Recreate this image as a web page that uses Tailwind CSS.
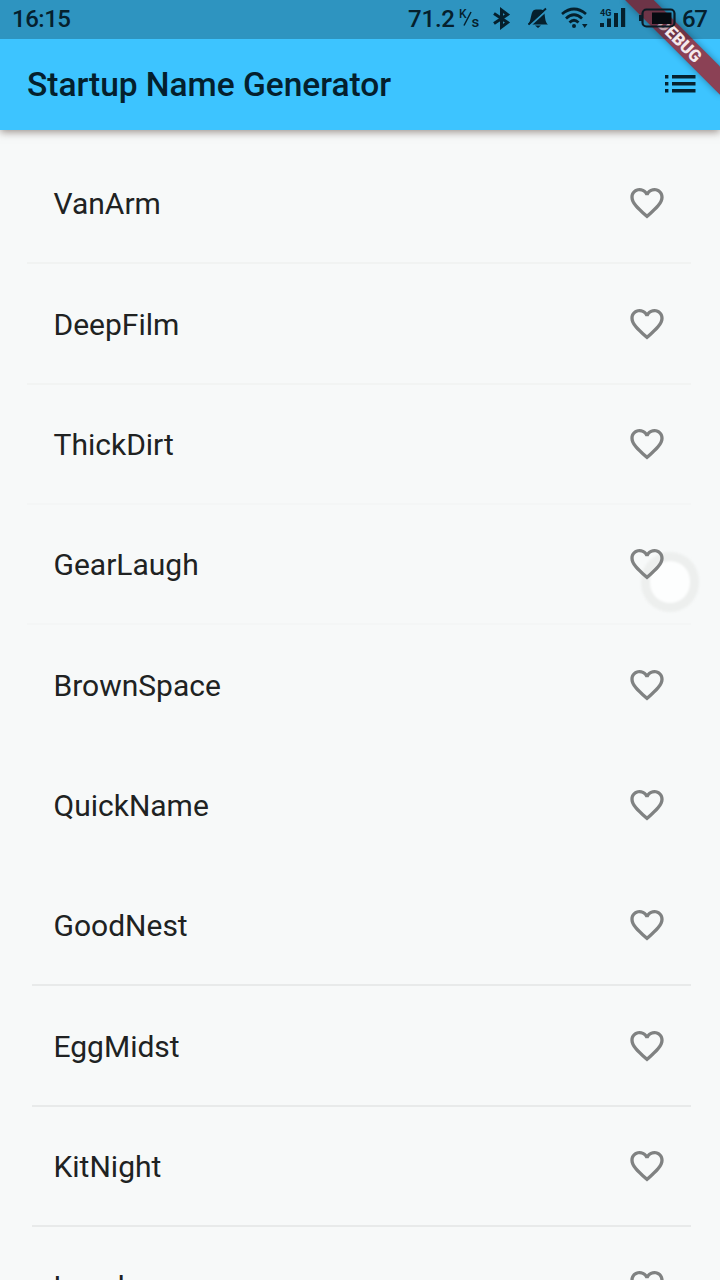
<!DOCTYPE html>
<html lang="en">
<head>
<meta charset="utf-8">
<title>Startup Name Generator</title>
<script src="https://cdn.jsdelivr.net/npm/@tailwindcss/browser@4"></script>
</head>
<body class="w-[720px] h-[1280px] overflow-hidden bg-[#f7f9f9] font-[Roboto,sans-serif]">
<div class="relative flex flex-col w-[720px] h-[1280px] overflow-hidden">
  <header class="relative z-10 shrink-0 h-[130px] bg-[#3dc4ff] text-[#04202d] shadow-[0_2px_8px_rgba(60,40,30,0.5)]">
    <div class="h-[39px] bg-[#2e94c0]"></div>
    <div class="flex items-center justify-between h-[91px] pl-[27px] pr-[24px]">
      <h1 class="text-[33.5px] leading-[40px] font-medium tracking-[-0.03px]">Startup Name Generator</h1>
      <svg class="w-[32px] h-[20px] mb-[2px]" viewBox="0 0 32 20" fill="#06222f"><path d="M1 1h3.400v3.400H1zM8 1h23.500v3.400H8zM1 8h3.400v3.400H1zM8 8h23.500v3.400H8zM1 15h3.400v3.400H1zM8 15h23.500v3.400H8z"/></svg>
    </div>
  </header>

  <main class="flex flex-col pt-[14px]" id="list"></main>

  <!-- touch indicator -->
  <div class="absolute left-[641px] top-[552px] w-[58px] h-[60px] rounded-full border-[9px] border-[#e9ebea]/80 bg-[#fdfefe] blur-[1px]"></div>

  <!-- debug ribbon -->
  <svg class="absolute z-20 right-0 top-0 w-[110px] h-[110px]" viewBox="610 0 110 110">
    <defs>
      <filter id="s" x="-20%" y="-60%" width="140%" height="220%"><feGaussianBlur stdDeviation="3.5"/></filter>
      <clipPath id="bar"><path d="M610 0H720V39H610z"/></clipPath>
    </defs>
    <g transform="translate(720 0) rotate(45)">
      <rect x="-67" y="47" width="134" height="20" fill="#000" opacity=".35" filter="url(#s)"/>
      <rect x="-70" y="47" width="140" height="20" fill="#8b4155"/>
    </g>
    <g clip-path="url(#bar)"><rect x="-70" y="47" width="140" height="20" fill="#6d3447" transform="translate(720 0) rotate(45)"/></g>
    <text transform="translate(720 0) rotate(45)" x="0" y="63" text-anchor="middle" font-family="Roboto" font-weight="900" font-size="17" fill="#f4e9ec"><tspan fill="#c0a5ae">D</tspan>EBUG</text>
  </svg>

  <!-- system status bar -->
  <div class="absolute z-30 left-0 top-0 w-[720px] h-[39px]">
    <svg class="w-[720px] h-[39px]" viewBox="0 0 720 39" fill="#05202d" font-family="Roboto" font-weight="500">
      <text x="12" y="27" font-size="24" textLength="59">16:15</text>
      <text x="408" y="27" font-size="24" textLength="47">71.2</text>
      <text x="459" y="18" font-size="12">K</text>
      <path d="M464 25.500L471 12" stroke="#05202d" stroke-width="1.500"/>
      <text x="471.500" y="27" font-size="15">s</text>
      <path d="M494 13.500L507.500 22.500L501.500 27V10L507.500 14.500L494 23.500" fill="none" stroke="#05202d" stroke-width="3"/>
      <path d="M528 24.500C532 21 530 9.500 536 9.500H541C546.500 9.500 543.500 21 548 24.500ZM535 25.500H541L538 28Z"/>
      <path d="M529 26.500L547 10" stroke="#2e94c0" stroke-width="2"/>
      <path d="M528.500 24.500L546 8.500" stroke="#05202d" stroke-width="1.800"/>
      <g fill="none" stroke="#05202d" stroke-width="2.700"><path d="M562 14Q574 4 586 14M566 18.500Q574 11 582 18.500M569.500 22.500Q574 18 578.500 22.500"/></g>
      <circle cx="574" cy="26" r="2"/><path d="M582 24H587.500L584.700 28Z"/>
      <text x="600" y="16" font-size="9" font-weight="700">4G</text>
      <path d="M600 23h4v4h-4zM607 18.500h4v8.500h-4zM614 13h4v14h-4zM621 8h4.200v19h-4.200z"/>
      <rect x="642.500" y="9.500" width="32" height="17" rx="4" fill="none" stroke="#0b1a24" stroke-width="2.200"/>
      <rect x="652" y="12.500" width="19.500" height="11.500" fill="#060a10"/><rect x="639" y="15" width="3" height="6"/>
      <text x="682" y="27" font-size="24" textLength="26">67</text>
    </svg>
  </div>
</div>
<template id="row">
  <div class="flex shrink-0 items-center justify-between h-[120.35px] mr-[29px] pr-[27.5px] border-b-2">
    <span class="text-[30px] leading-[36px] text-[#202222] pt-[2px]"></span>
    <svg class="relative z-[1] w-[40px] h-[40px] -mr-[3px]" viewBox="0 0 24 24" fill="#808282"><path d="M16.5 3c-1.740 0-3.410.81-4.500 2.090C10.910 3.810 9.240 3 7.500 3 4.420 3 2 5.420 2 8.500c0 3.780 3.400 6.860 8.550 11.540L12 21.350l1.450-1.320C18.600 15.360 22 12.280 22 8.500 22 5.420 19.580 3 16.500 3zm-4.400 15.550l-.1.1-.1-.1C7.140 14.240 4 11.390 4 8.500 4 6.500 5.500 5 7.500 5c1.540 0 3.040.99 3.570 2.360h1.870C13.460 5.990 14.960 5 16.500 5c2 0 3.500 1.500 3.500 3.500 0 2.890-3.140 5.740-7.900 10.050z"/></svg>
  </div>
</template>
<script>
const names=['VanArm','DeepFilm','ThickDirt','GearLaugh','BrownSpace','QuickName','GoodNest','EggMidst','KitNight','Lunch'];
const borders=['#f1f3f2','#f2f4f3','#f4f6f6','#f4f6f6','transparent','transparent','#e8eaea','#e8eaea','#e8eaea','transparent'];
const list=document.getElementById('list');
names.forEach((n,i)=>{
  const r=document.getElementById('row').content.cloneNode(true);
  const el=r.firstElementChild;
  r.querySelector('span').textContent=n;
  el.style.borderColor=borders[i];
  el.classList.add(...(i>5?['ml-[32px]','pl-[21.5px]']:['ml-[27px]','pl-[26.5px]']));
  list.append(r);
});
</script>
</body>
</html>
